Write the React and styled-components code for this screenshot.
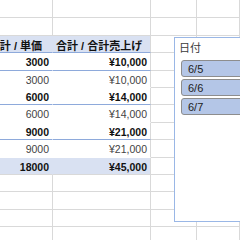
import React from "react";
import styled, { createGlobalStyle } from "styled-components";

const GRID = "#d9d9d9";
const BLUE = "#8eaadb";
const FILL = "#d9e1f2";

const GlobalStyle = createGlobalStyle`
  html, body { margin: 0; padding: 0; background: #fff; }
  body {
    font-family: "Liberation Sans", "Noto Sans CJK JP", sans-serif;
    -webkit-font-smoothing: antialiased;
  }
`;

const Sheet = styled.div`
  position: relative;
  width: 240px;
  height: 240px;
  overflow: hidden;
  display: flex;
  flex-direction: column;
  background: #fff;
`;

const Row = styled.div`
  display: grid;
  grid-template-columns: 53px 98px 46px 1fr;
  height: ${(p) => p.$h}px;
  flex: none;
`;

const borderFor = (kind) =>
  kind === "blue" ? `1px solid ${BLUE}` : kind === "none" ? "1px solid transparent" : `1px solid ${GRID}`;

const Cell = styled.div`
  box-sizing: border-box;
  display: flex;
  align-items: center;
  justify-content: ${(p) => (p.$align === "right" ? "flex-end" : "flex-start")};
  overflow: hidden;
  white-space: nowrap;
  padding: ${(p) => (p.$align === "right" ? "1px 3px 0 0" : "1px 0 0 3px")};
  border-right: ${(p) => borderFor(p.$right || "grid")};
  border-bottom: ${(p) => borderFor(p.$bottom || "grid")};
  background: ${(p) => (p.$fill ? FILL : "transparent")};
  font-size: 10.5px;
  font-weight: ${(p) => (p.$bold ? 700 : 400)};
  color: ${(p) => (p.$bold ? "#111" : "#444")};
`;

const HeaderCell = styled(Cell)`
  font-size: 11px;
  font-weight: 700;
  color: #111;
`;

const ClippedHeader = styled(HeaderCell)`
  justify-content: flex-end;
  padding: 1px 10px 0 0;
`;

const Slicer = styled.div`
  position: absolute;
  left: 174px;
  top: 37px;
  width: 90px;
  height: 185px;
  box-sizing: border-box;
  border: 1px solid #9ab7e6;
  background: #fff;
  display: flex;
  flex-direction: column;
`;

const SlicerTitle = styled.div`
  height: 18px;
  display: flex;
  align-items: center;
  padding-left: 4px;
  font-size: 11px;
  color: #3a3a3a;
  font-family: "Noto Sans CJK JP", sans-serif;
`;

const ItemList = styled.div`
  display: flex;
  flex-direction: column;
  gap: 2px;
  margin-top: 4px;
  padding-left: 6px;
`;

const Item = styled.div`
  box-sizing: border-box;
  height: 17px;
  width: 120px;
  display: flex;
  align-items: center;
  padding-left: 6px;
  border: 1px solid #8d8d8d;
  border-radius: 3px;
  background: #b4c6e7;
  font-size: 11px;
  color: #1c1c1c;
`;

const heights = [18, 18, 17, 18, 17, 17, 18, 17, 18, 17, 17, 18, 17, 17];

const pivot = [
  { a: "3000", b: "¥10,000", bold: true },
  { a: "3000", b: "¥10,000", bold: false },
  { a: "6000", b: "¥14,000", bold: true },
  { a: "6000", b: "¥14,000", bold: false },
  { a: "9000", b: "¥21,000", bold: true },
  { a: "9000", b: "¥21,000", bold: false },
];

function EmptyRow({ h }) {
  return (
    <Row $h={h}>
      <Cell />
      <Cell />
      <Cell />
      <Cell />
    </Row>
  );
}

export default function App() {
  return (
    <>
      <GlobalStyle />
      <Sheet>
        <EmptyRow h={heights[0]} />
        <EmptyRow h={heights[1]} />
        <Row $h={heights[2]}>
          <ClippedHeader $fill $right="none" $bottom="blue">合計 / 単価</ClippedHeader>
          <HeaderCell $fill $bottom="blue">合計 / 合計売上げ</HeaderCell>
          <Cell />
          <Cell />
        </Row>
        {pivot.map((r, i) => (
          <Row key={i} $h={heights[3 + i]}>
            <Cell $align="right" $bold={r.bold} $right="none" $bottom={r.bold ? "blue" : "none"}>
              {r.a}
            </Cell>
            <Cell $align="right" $bold={r.bold} $bottom={r.bold ? "blue" : "none"}>
              {r.b}
            </Cell>
            <Cell />
            <Cell />
          </Row>
        ))}
        <Row $h={heights[9]}>
          <Cell $align="right" $bold $fill $right="none">18000</Cell>
          <Cell $align="right" $bold $fill>¥45,000</Cell>
          <Cell />
          <Cell />
        </Row>
        {heights.slice(10).map((h, i) => (
          <EmptyRow key={i} h={h} />
        ))}
        <Slicer>
          <SlicerTitle>日付</SlicerTitle>
          <ItemList>
            <Item>6/5</Item>
            <Item>6/6</Item>
            <Item>6/7</Item>
          </ItemList>
        </Slicer>
      </Sheet>
    </>
  );
}
